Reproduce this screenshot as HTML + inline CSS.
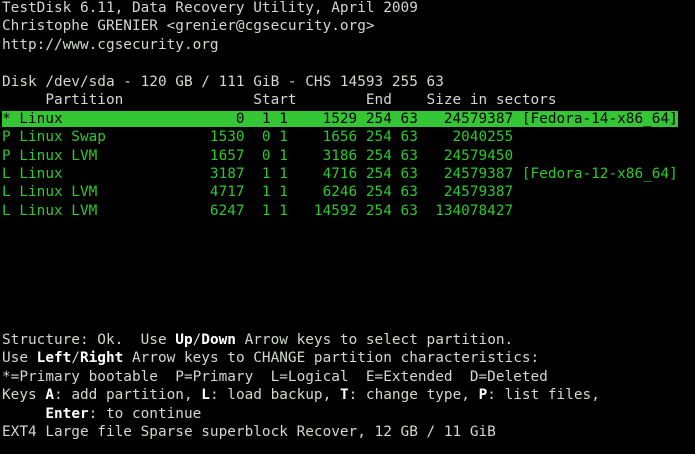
<!DOCTYPE html>
<html><head><style>
html,body{margin:0;padding:0;background:#000;width:695px;height:454px;overflow:hidden}
pre{position:absolute;left:2px;top:-1px;margin:0;font-family:"DejaVu Sans Mono","Liberation Mono",monospace;font-size:14.4px;line-height:18.44px;color:#d3d7cf;white-space:pre}
.g{color:#2cc82c}
.h{background:#34c634;color:#000}
b{color:#fff}
</style></head><body>
<pre>TestDisk 6.11, Data Recovery Utility, April 2009
Christophe GRENIER &lt;grenier@cgsecurity.org&gt;
http://www.cgsecurity.org

Disk /dev/sda - 120 GB / 111 GiB - CHS 14593 255 63
     Partition               Start        End    Size in sectors
<span class="h">* Linux                    0  1 1    1529 254 63   24579387 [Fedora-14-x86_64]</span>
<span class="g">P Linux Swap            1530  0 1    1656 254 63    2040255
P Linux LVM             1657  0 1    3186 254 63   24579450
L Linux                 3187  1 1    4716 254 63   24579387 [Fedora-12-x86_64]
L Linux LVM             4717  1 1    6246 254 63   24579387
L Linux LVM             6247  1 1   14592 254 63  134078427</span>






Structure: Ok.  Use <b>Up</b>/<b>Down</b> Arrow keys to select partition.
Use <b>Left</b>/<b>Right</b> Arrow keys to CHANGE partition characteristics:
*=Primary bootable  P=Primary  L=Logical  E=Extended  D=Deleted
Keys <b>A</b>: add partition, <b>L</b>: load backup, <b>T</b>: change type, <b>P</b>: list files,
     <b>Enter</b>: to continue
EXT4 Large file Sparse superblock Recover, 12 GB / 11 GiB</pre>
</body></html>
